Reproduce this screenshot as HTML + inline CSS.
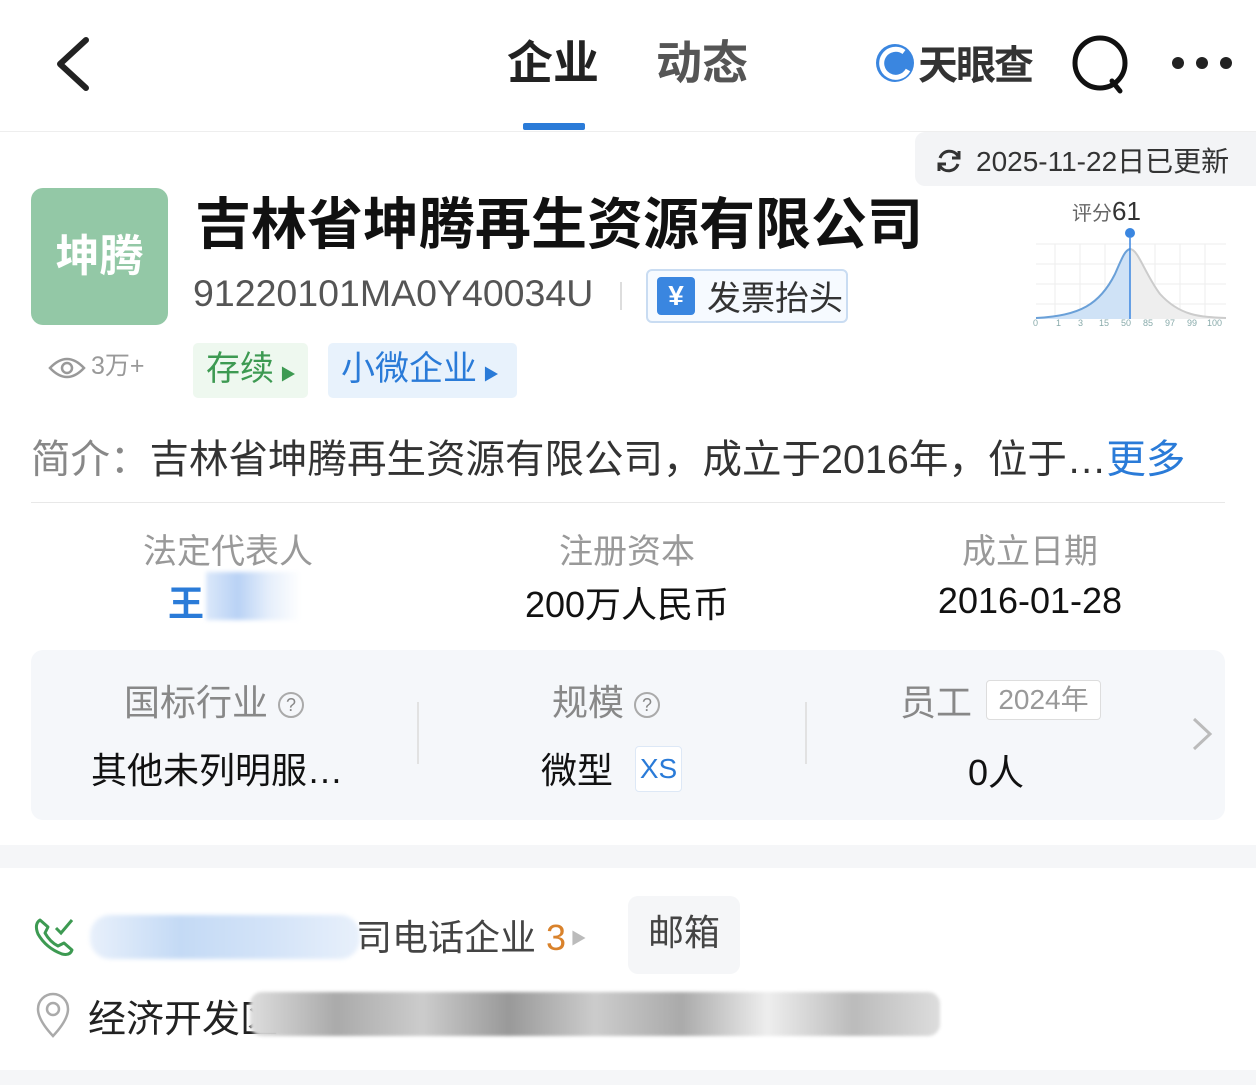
<!DOCTYPE html>
<html><head><meta charset="utf-8"><style>
*{margin:0;padding:0;box-sizing:border-box}
body{width:1256px;height:1085px;background:#fff;font-family:"Liberation Sans","Noto Sans CJK SC",sans-serif;position:relative;overflow:hidden;color:#222}
.a{position:absolute;white-space:nowrap}
</style></head><body>
<svg class="a" style="left:52px;top:36px" width="40" height="56"><path d="M34 4 L8 28 L34 52" fill="none" stroke="#222" stroke-width="6" stroke-linecap="round" stroke-linejoin="round"/></svg>
<div class="a" style="left:507px;top:27px;font-size:46px;font-weight:bold;color:#222">企业</div>
<div class="a" style="left:656px;top:27px;font-size:46px;font-weight:bold;color:#555">动态</div>
<div class="a" style="left:523px;top:123px;width:62px;height:7px;background:#2a7bd8;border-radius:2px"></div>
<svg class="a" style="left:874px;top:42px" width="42" height="42"><circle cx="21" cy="21" r="19" fill="#3a86e0"/><path d="M30 10 A14 14 0 1 0 34 28" fill="none" stroke="#fff" stroke-width="5"/></svg>
<div class="a" style="left:918px;top:33px;font-size:40px;font-weight:bold;color:#333;letter-spacing:-2px">天眼查</div>
<svg class="a" style="left:1070px;top:34px" width="64" height="60"><circle cx="30" cy="29" r="25" fill="none" stroke="#111" stroke-width="5"/><path d="M42 47 L50 57" stroke="#111" stroke-width="5" stroke-linecap="round"/></svg>
<svg class="a" style="left:1170px;top:55px" width="64" height="16"><circle cx="8" cy="8" r="6" fill="#222"/><circle cx="32" cy="8" r="6" fill="#222"/><circle cx="56" cy="8" r="6" fill="#222"/></svg>
<div class="a" style="left:0;top:131px;width:1256px;height:1px;background:#eee"></div>
<div class="a" style="left:915px;top:132px;width:341px;height:54px;background:#f3f4f6;border-radius:10px 0 0 10px"></div>
<svg class="a" style="left:934px;top:146px" width="30" height="30"><path d="M24 10 A10 10 0 0 0 6 12 M6 20 A10 10 0 0 0 24 18" fill="none" stroke="#333" stroke-width="3"/><path d="M25 5 L25 12 L18 12" fill="none" stroke="#333" stroke-width="3"/><path d="M5 25 L5 18 L12 18" fill="none" stroke="#333" stroke-width="3"/></svg>
<div class="a" style="left:976px;top:140px;font-size:28px;color:#333">2025-11-22日已更新</div>
<div class="a" style="left:31px;top:188px;width:137px;height:137px;background:#93c8a6;border-radius:12px;color:#fff;font-size:44px;font-weight:bold;text-align:center;line-height:137px">坤腾</div>
<div class="a" style="left:195px;top:180px;font-size:56px;font-weight:bold;color:#111">吉林省坤腾再生资源有限公司</div>
<div class="a" style="left:193px;top:272px;font-size:37.5px;color:#555">91220101MA0Y40034U</div>
<div class="a" style="left:620px;top:282px;width:2px;height:28px;background:#ddd"></div>
<div class="a" style="left:646px;top:269px;width:202px;height:54px;border:2px solid #c9dcf2;border-radius:6px;background:#f6faff"></div>
<div class="a" style="left:657px;top:277px;width:38px;height:38px;background:#3a86e0;border-radius:4px;color:#fff;font-size:28px;text-align:center;line-height:38px;font-weight:bold">¥</div>
<div class="a" style="left:707px;top:271px;font-size:34px;color:#333">发票抬头</div>
<div class="a" style="left:1072px;top:196px;font-size:20px;color:#666">评分<span style="font-size:26px;color:#333">61</span></div>
<svg class="a" style="left:1030px;top:224px" width="200" height="108">
<g stroke="#eee" stroke-width="1"><path d="M6 20H196M6 40H196M6 60H196M6 80H196M25 20V95M50 20V95M75 20V95M125 20V95M150 20V95M175 20V95"/></g>
<path d="M6 94 C50 92 70 80 85 50 C92 34 95 26 100 25 L100 95 L6 95Z" fill="#cfe2f6"/>
<path d="M100 25 C108 25 115 50 130 70 C150 92 170 93 196 94 L196 95 L100 95Z" fill="#eee"/>
<path d="M6 94 C50 92 70 80 85 50 C92 34 95 26 100 25" fill="none" stroke="#6aa0d8" stroke-width="2"/>
<path d="M100 25 C108 25 115 50 130 70 C150 92 170 93 196 94" fill="none" stroke="#ccc" stroke-width="2"/>
<path d="M100 14 V95" stroke="#3a86e0" stroke-width="1.5"/><circle cx="100" cy="9" r="5" fill="#3a86e0"/>
<text y="102" font-size="9" fill="#8aa" font-family="Liberation Sans"><tspan x="3">0</tspan><tspan x="26">1</tspan><tspan x="48">3</tspan><tspan x="69">15</tspan><tspan x="91">50</tspan><tspan x="113">85</tspan><tspan x="135">97</tspan><tspan x="157">99</tspan><tspan x="177">100</tspan></text></svg>
<svg class="a" style="left:48px;top:354px" width="38" height="28"><path d="M2 14 Q19 -4 36 14 Q19 32 2 14Z" fill="none" stroke="#999" stroke-width="2.5"/><circle cx="19" cy="14" r="5" fill="none" stroke="#999" stroke-width="2.5"/></svg>
<div class="a" style="left:91px;top:346px;font-size:25px;color:#999">3万+</div>
<div class="a" style="left:193px;top:343px;width:115px;height:55px;background:#eef8ef;border-radius:5px;color:#3d9a52;font-size:34px;line-height:52px;padding-left:13px">存续<span style="font-size:16px;margin-left:6px">▶</span></div>
<div class="a" style="left:328px;top:343px;width:189px;height:55px;background:#e8f2fc;border-radius:5px;color:#2a7bd8;font-size:34px;line-height:52px;padding-left:13px">小微企业<span style="font-size:16px;margin-left:6px">▶</span></div>
<div class="a" style="left:31px;top:428px;font-size:39.5px;color:#333"><span style="color:#888">简介：</span>吉林省坤腾再生资源有限公司，成立于2016年，位于…<span style="color:#2a7bd8">更多</span></div>
<div class="a" style="left:31px;top:502px;width:1194px;height:1px;background:#e8e8e8"></div>
<div class="a" style="left:68px;top:524px;width:320px;text-align:center;font-size:34px;color:#999">法定代表人</div>
<div class="a" style="left:168px;top:575px;font-size:36px;color:#2a7bd8;font-weight:bold">王</div>
<div class="a" style="left:206px;top:572px;width:95px;height:48px;background:linear-gradient(90deg,#dbe8fa,#b9d2f5,#e6effb,#fff);filter:blur(2px)"></div>
<div class="a" style="left:467px;top:524px;width:320px;text-align:center;font-size:34px;color:#999">注册资本</div>
<div class="a" style="left:467px;top:576px;width:320px;text-align:center;font-size:36px;color:#111">200万人民币</div>
<div class="a" style="left:870px;top:524px;width:320px;text-align:center;font-size:34px;color:#999">成立日期</div>
<div class="a" style="left:870px;top:580px;width:320px;text-align:center;font-size:36px;color:#111">2016-01-28</div>
<div class="a" style="left:31px;top:650px;width:1194px;height:170px;background:#f5f7fa;border-radius:12px"></div>
<div class="a" style="left:124px;top:674px;font-size:36px;color:#888">国标行业 <span style="display:inline-block;width:26px;height:26px;border:2px solid #aaa;border-radius:50%;font-size:18px;text-align:center;line-height:22px;vertical-align:4px">?</span></div>
<div class="a" style="left:91px;top:742px;font-size:36px;color:#111">其他未列明服…</div>
<div class="a" style="left:417px;top:702px;width:2px;height:62px;background:#e2e2e2"></div>
<div class="a" style="left:552px;top:674px;font-size:36px;color:#888">规模 <span style="display:inline-block;width:26px;height:26px;border:2px solid #aaa;border-radius:50%;font-size:18px;text-align:center;line-height:22px;vertical-align:4px">?</span></div>
<div class="a" style="left:541px;top:742px;font-size:36px;color:#111">微型</div>
<div class="a" style="left:635px;top:746px;width:47px;height:46px;background:#fff;border:1px solid #dde8f6;border-radius:4px;color:#2a7bd8;font-size:28px;text-align:center;line-height:44px">XS</div>
<div class="a" style="left:805px;top:702px;width:2px;height:62px;background:#e2e2e2"></div>
<div class="a" style="left:900px;top:674px;font-size:36px;color:#888">员工</div>
<div class="a" style="left:986px;top:680px;width:115px;height:40px;border:1px solid #ddd;border-radius:4px;background:#fff;font-size:28px;color:#999;text-align:center;line-height:38px">2024年</div>
<div class="a" style="left:968px;top:744px;font-size:36px;color:#111">0人</div>
<svg class="a" style="left:1190px;top:716px" width="24" height="36"><path d="M4 3 L20 18 L4 33" fill="none" stroke="#bbb" stroke-width="3"/></svg>
<div class="a" style="left:0;top:845px;width:1256px;height:23px;background:#f5f6f8"></div>
<svg class="a" style="left:32px;top:914px" width="44" height="44"><path d="M8 6 Q2 10 6 20 Q14 34 30 40 Q38 42 40 36 L32 29 L26 32 Q18 28 13 19 L16 13 Z" fill="none" stroke="#3d9a52" stroke-width="3" stroke-linejoin="round"/><path d="M24 14 L29 19 L40 6" fill="none" stroke="#3d9a52" stroke-width="3"/></svg>
<div class="a" style="left:90px;top:915px;width:270px;height:44px;background:linear-gradient(90deg,#e8f0fb,#c4daf5,#d3e3f8,#e8f0fb);border-radius:20px;filter:blur(2px)"></div>
<div class="a" style="left:356px;top:909px;font-size:36px;color:#444">司电话企业 <span style="color:#d9822b">3</span><span style="font-size:16px;color:#bbb;vertical-align:6px"> ▶</span></div>
<div class="a" style="left:628px;top:896px;width:112px;height:78px;background:#f5f6f8;border-radius:10px;font-size:36px;color:#444;text-align:center;line-height:74px">邮箱</div>
<svg class="a" style="left:34px;top:992px" width="38" height="46"><path d="M19 44 Q4 28 4 17 A15 15 0 0 1 34 17 Q34 28 19 44Z" fill="none" stroke="#aaa" stroke-width="2.5"/><circle cx="19" cy="17" r="6" fill="none" stroke="#aaa" stroke-width="2.5"/></svg>
<div class="a" style="left:88px;top:988px;font-size:38px;color:#222">经济开发区</div>
<div class="a" style="left:250px;top:992px;width:690px;height:44px;background:linear-gradient(90deg,#ddd,#aaa,#ccc,#999,#ccc,#aaa,#eee,#bbb,#ddd);border-radius:12px;filter:blur(1.5px)"></div>
<div class="a" style="left:0;top:1070px;width:1256px;height:15px;background:#f5f6f8"></div>
</body></html>
